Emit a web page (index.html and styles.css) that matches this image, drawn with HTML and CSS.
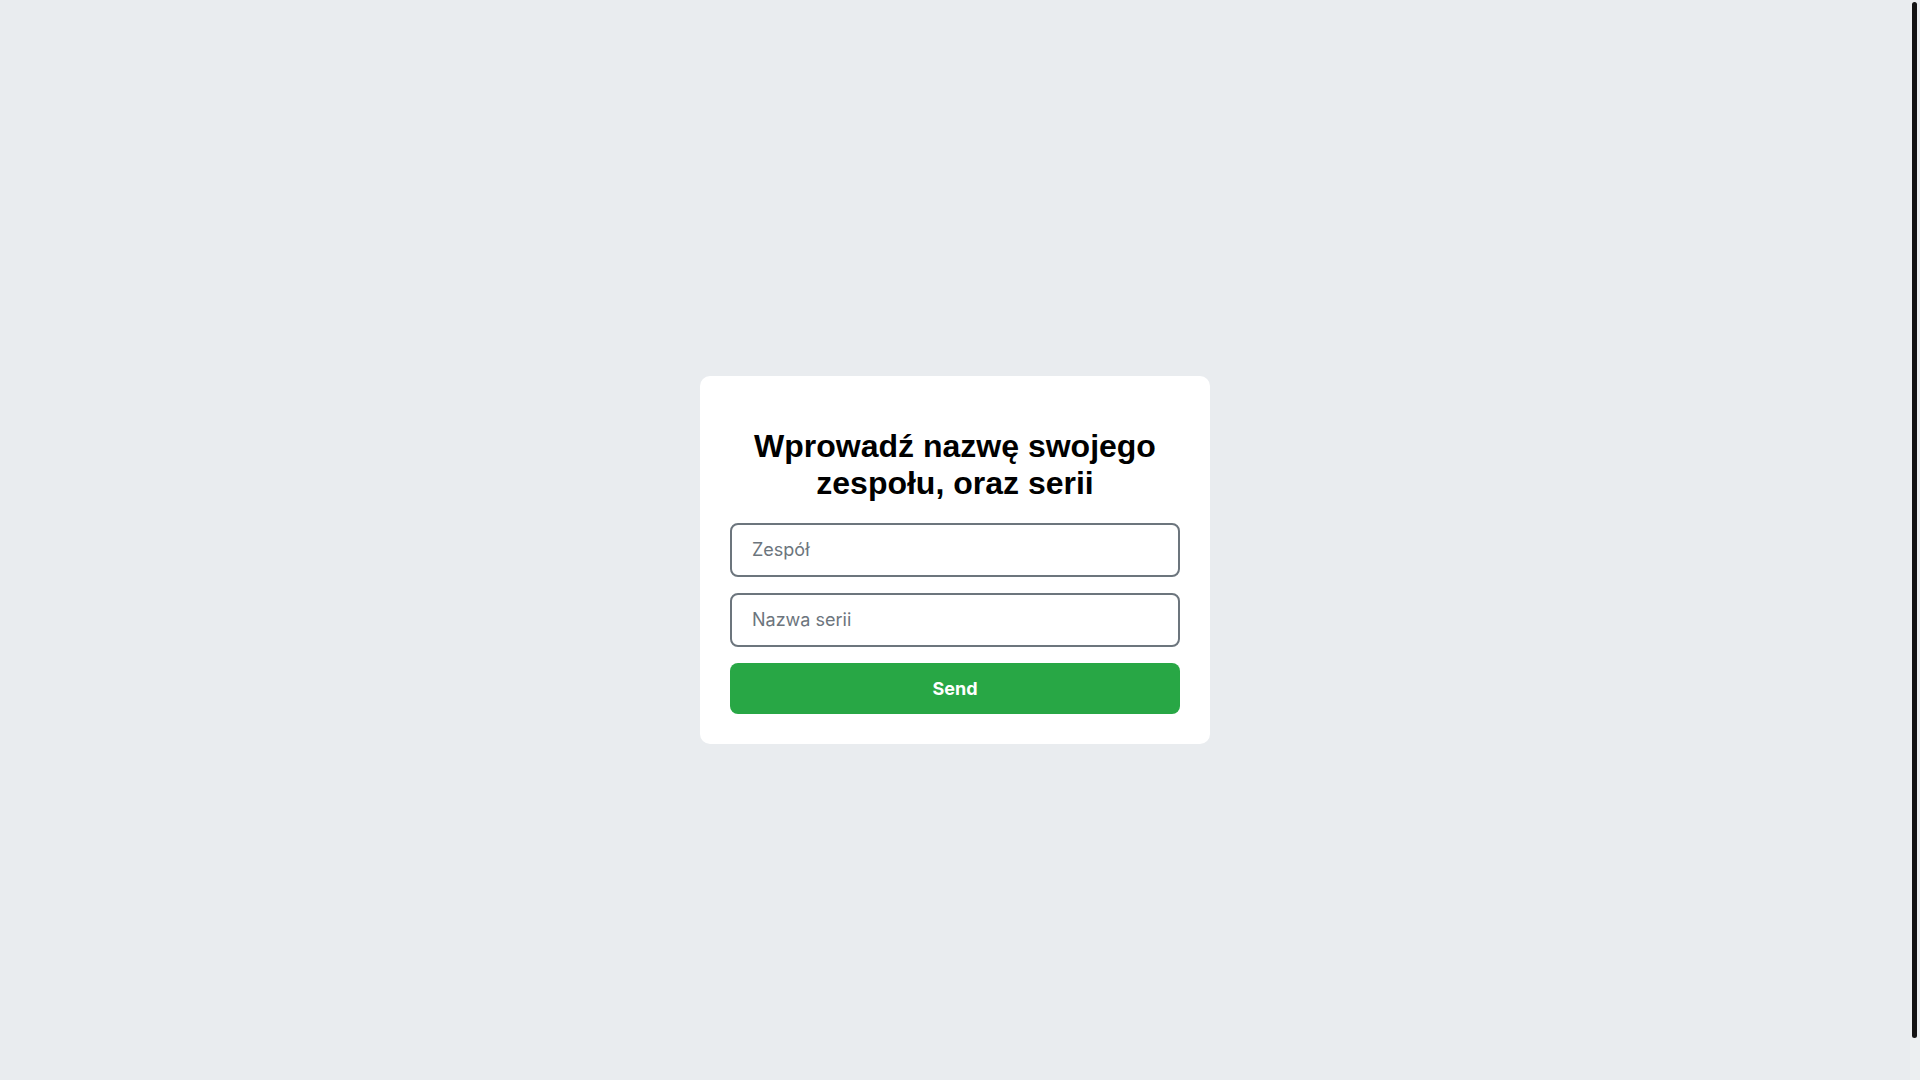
FILE: index.html
```html
<!DOCTYPE html>
<html lang="pl">
<head>
<meta charset="utf-8">
<title>Zespół</title>
<link rel="stylesheet" href="styles.css">
</head>
<body>
<main class="page">
  <section class="card">
    <h1 class="title">Wprowadź nazwę swojego zespołu, oraz serii</h1>
    <form class="form">
      <input class="field" type="text" placeholder="Zespół">
      <input class="field" type="text" placeholder="Nazwa serii">
      <button class="send" type="button">Send</button>
    </form>
  </section>
</main>
<div class="scrollbar" aria-hidden="true"><div class="thumb"></div></div>
</body>
</html>
```

FILE: styles.css
```css
html {
  background: #e9ecef;
}
body {
  margin: 0;
  background: #e9ecef;
  font-family: "Liberation Sans", Arial, sans-serif;
}
.page {
  box-sizing: border-box;
  min-height: 1120px;
  padding-right: 10px;
  display: flex;
  align-items: center;
  justify-content: center;
}
.card {
  width: 450px;
  padding: 30px;
  background: #fff;
  border-radius: 10px;
}
.title {
  margin: 0.67em 0;
  font-size: 32px;
  font-weight: 700;
  color: #000;
  text-align: center;
}
.form {
  display: flex;
  flex-direction: column;
  gap: 16px;
}
.field {
  box-sizing: border-box;
  height: 54px;
  padding: 0 20px;
  border: 2px solid #6c757d;
  border-radius: 8px;
  font-family: Inter, "Noto Sans", sans-serif;
  font-size: 18px;
  color: #212529;
  background: #fff;
  outline: none;
}
.field::placeholder {
  color: #6c757d;
}
.send {
  height: 51px;
  border: none;
  border-radius: 8px;
  background: #28a745;
  color: #fff;
  font-family: Inter, "Noto Sans", sans-serif;
  font-size: 18px;
  font-weight: 700;
  cursor: pointer;
}
.scrollbar {
  position: fixed;
  top: 0;
  right: 0;
  width: 10px;
  height: 100vh;
  background: #eceff1;
}
.thumb {
  margin: 2px 3px 0 2px;
  height: 1036px;
  background: #141414;
  border-radius: 3px;
}
```
